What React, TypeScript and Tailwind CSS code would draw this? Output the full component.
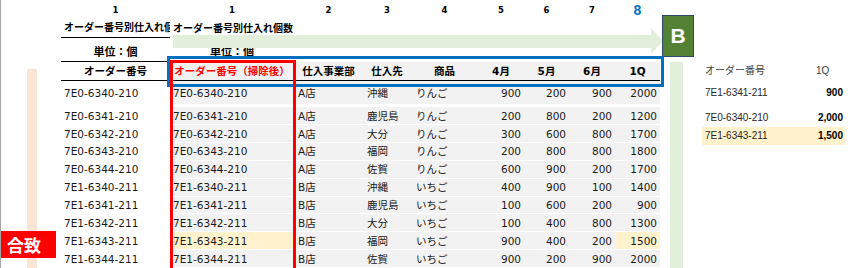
const COLS = "grid grid-cols-[109px_124px_69px_48px_67px_46px_45px_46px_45px]";

type Row = [string, string, string, string, string, number, number, number, number];

const rows: Row[] = [
  ["7E0-6340-210", "7E0-6340-210", "A店", "沖縄", "りんご", 900, 200, 900, 2000],
  ["7E0-6341-210", "7E0-6341-210", "A店", "鹿児島", "りんご", 200, 800, 200, 1200],
  ["7E0-6342-210", "7E0-6342-210", "A店", "大分", "りんご", 300, 600, 800, 1700],
  ["7E0-6343-210", "7E0-6343-210", "A店", "福岡", "りんご", 200, 800, 800, 1800],
  ["7E0-6344-210", "7E0-6344-210", "A店", "佐賀", "りんご", 600, 900, 200, 1700],
  ["7E1-6340-211", "7E1-6340-211", "B店", "沖縄", "いちご", 400, 900, 100, 1400],
  ["7E1-6341-211", "7E1-6341-211", "B店", "鹿児島", "いちご", 100, 600, 200, 900],
  ["7E1-6342-211", "7E1-6342-211", "B店", "大分", "いちご", 100, 400, 800, 1300],
  ["7E1-6343-211", "7E1-6343-211", "B店", "福岡", "いちご", 900, 400, 200, 1500],
  ["7E1-6344-211", "7E1-6344-211", "B店", "佐賀", "いちご", 900, 200, 900, 2000],
];

const HIT = 8;

const summary = [
  { id: "7E1-6341-211", q: "900", gap: "mt-[4px]", hl: false },
  { id: "7E0-6340-210", q: "2,000", gap: "mt-[7px]", hl: false },
  { id: "7E1-6343-211", q: "1,500", gap: "", hl: true },
];

const headers = ["仕入事業部", "仕入先", "商品", "4月", "5月", "6月", "1Q"];

const DataRow = ({ r, i }: { r: Row; i: number }) => {
  const hl = i === HIT;
  return (
    <div
      className={clsx(
        COLS,
        "text-[10.5px] leading-[14px] text-[#1a1a1a]",
        i === 0 ? "h-[26px] pb-[3px]" : "h-[18px] pb-[1px]"
      )}
    >
      <div className="flex items-center pl-[3px] bg-white">{r[0]}</div>
      <div className={clsx("flex items-center pl-[3px]", hl ? "bg-[#fff2cc]" : "bg-[#f2f2f2]")}>{r[1]}</div>
      <div className="flex items-center pl-[4px] bg-[#f2f2f2]">{r[2]}</div>
      <div className="flex items-center pl-[4px] bg-[#f2f2f2]">{r[3]}</div>
      <div className="flex items-center pl-[5px] bg-[#f2f2f2]">{r[4]}</div>
      <div className="flex items-center justify-end pr-[3px] bg-[#f2f2f2]">{r[5]}</div>
      <div className="flex items-center justify-end pr-[3px] bg-[#f2f2f2]">{r[6]}</div>
      <div className="flex items-center justify-end pr-[3px] bg-[#f2f2f2]">{r[7]}</div>
      <div className={clsx("flex items-center justify-end pr-[3px]", hl ? "bg-[#fff2cc]" : "bg-[#f2f2f2]")}>{r[8]}</div>
    </div>
  );
};

import clsx from "clsx";

export default function App() {
  return (
    <div className="relative w-[853px] h-[268px] overflow-hidden bg-white border-l border-[#a6a6a6] flex font-['DejaVu_Sans','Noto_Sans_CJK_JP',sans-serif] text-black">
      {/* left gutter */}
      <div className="w-[60px] shrink-0 flex flex-col pt-[69px]">
        <div className="ml-[26px] w-[10px] flex-1 bg-[#fbe5d6]" />
      </div>

      {/* sheet */}
      <div className="w-[599px] shrink-0 flex flex-col">
        <div className={clsx(COLS, "h-[20px] items-center text-center text-[8.5px] font-bold")}>
          <span>1</span>
          <span>1</span>
          <span>2</span>
          <span>3</span>
          <span>4</span>
          <span>5</span>
          <span>6</span>
          <span>7</span>
          <span className="text-[14px] text-[#0070c0] font-['Liberation_Sans',sans-serif]">8</span>
        </div>

        <div className={clsx(COLS, "h-[18px] text-[10px] font-bold leading-[14px]")}>
          <div className="flex items-center pl-[3px] border-b border-black overflow-hidden whitespace-nowrap">
            オーダー番号別仕入れ個数
          </div>
          <div className="col-span-8 flex items-center pl-[3px] whitespace-nowrap">オーダー番号別仕入れ個数</div>
        </div>

        <div className={clsx(COLS, "h-[24px] text-[11px] font-bold leading-[14px]")}>
          <div className="flex items-end justify-center pb-[1px] border-b border-black">単位：個</div>
          <div className="flex items-end justify-center pb-[2px]">単位：個</div>
        </div>

        <div className={clsx(COLS, "h-[20px] text-[10.5px] font-bold leading-[14px] border-b border-black")}>
          <div className="flex items-center justify-center bg-white">オーダー番号</div>
          <div className="flex items-center justify-center bg-[#f2f2f2] text-[#ff0000] whitespace-nowrap">
            オーダー番号（掃除後）
          </div>
          {headers.map((h) => (
            <div key={h} className="flex items-center justify-center bg-[#f2f2f2] whitespace-nowrap">
              {h}
            </div>
          ))}
        </div>

        {rows.map((r, i) => (
          <DataRow key={r[0]} r={r} i={i} />
        ))}
      </div>

      <div className="w-[10px] shrink-0" />
      <div className="w-[13px] shrink-0 mt-[62px] bg-[#e2efda]" />
      <div className="w-[19px] shrink-0" />

      {/* summary */}
      <div className="w-[143px] shrink-0 pt-[62px] flex flex-col text-[10px] leading-[14px] font-['Liberation_Sans','Noto_Sans_CJK_JP',sans-serif] text-[#262626]">
        <div className="grid grid-cols-[111px_32px] h-[18px] items-center text-[#404040]">
          <span className="pl-[3px]">オーダー番号</span>
          <span className="pl-[3px]">1Q</span>
        </div>
        {summary.map((s) => (
          <div
            key={s.id}
            className={clsx("grid grid-cols-[111px_32px] h-[18px] items-center", s.gap, s.hl && "bg-[#fff2cc]")}
          >
            <span className="pl-[3px]">{s.id}</span>
            <span className="text-right pr-[2px] font-bold text-black">{s.q}</span>
          </div>
        ))}
      </div>

      {/* annotations */}
      <svg className="absolute left-[172px] top-[28px]" width="490" height="27" viewBox="0 0 490 27">
        <path d="M0 7 H478 V0 L490 13 L478 26 V20 H0 Z" fill="#e2efda" />
      </svg>
      <div className="absolute left-[661px] top-[15px] w-[32px] h-[42px] bg-[#548235] border border-[#2e4a6b] flex items-center justify-center text-white font-bold text-[21px] font-['Liberation_Sans',sans-serif]">
        B
      </div>
      <div className="absolute left-[166px] top-[56px] w-[497px] h-[31px] border-[3px] border-[#0070c0]" />
      <div className="absolute left-[169px] top-[60px] w-[126px] h-[230px] border-[3px] border-[#ff0000]" />
      <div className="absolute left-0 top-[231px] w-[55px] h-[27px] bg-[#ff0000] text-white font-bold text-[17px] leading-none flex items-center pl-[6px] font-['Noto_Sans_CJK_JP',sans-serif]">
        合致
      </div>
    </div>
  );
}
